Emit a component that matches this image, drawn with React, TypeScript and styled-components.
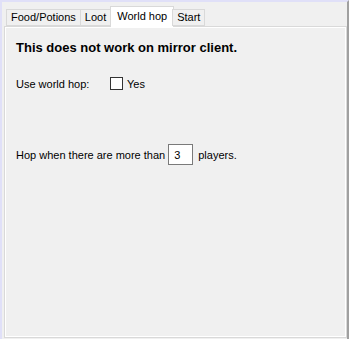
import React from "react";
import styled, { createGlobalStyle } from "styled-components";

const GlobalStyle = createGlobalStyle`
  html, body {
    margin: 0;
    padding: 0;
    background: #f0f0f0;
  }
  body {
    font-family: "Liberation Sans", Arial, sans-serif;
    font-size: 11px;
    color: #000;
  }
`;

const Frame = styled.div`
  box-sizing: border-box;
  width: 349px;
  height: 339px;
  display: flex;
  flex-direction: column;
  background: #f0f0f0;
  border-top: 2px solid #e0e0f8;
  border-left: 2px solid #e0e0f8;
  border-right: 2px solid #a0a0a0;
  padding: 0 0 1px 2px;
`;

const TabStrip = styled.div`
  display: flex;
  align-items: flex-end;
  height: 24px;
  padding-left: 2px;
  position: relative;
  z-index: 1;
`;

const Tab = styled.div<{ $active?: boolean }>`
  box-sizing: border-box;
  height: ${(p) => (p.$active ? 21 : 17)}px;
  padding: 0 ${(p) => (p.$active ? 6 : 4)}px;
  padding-bottom: ${(p) => (p.$active ? 3 : 1)}px;
  margin-bottom: ${(p) => (p.$active ? -1 : 0)}px;
  margin-left: -1px;
  margin-right: ${(p) => (p.$active ? -1 : 0)}px;
  display: flex;
  align-items: center;
  background: ${(p) => (p.$active ? "#ffffff" : "#f0f0f0")};
  border: 1px solid #d9d9d9;
  border-bottom: ${(p) => (p.$active ? "none" : "1px solid #d9d9d9")};
  white-space: nowrap;
  &:first-child {
    margin-left: 0;
  }
`;

const Panel = styled.div`
  flex: 1;
  box-sizing: border-box;
  border: 1px solid #d9d9d9;
  box-shadow: inset 1px 1px 0 #ffffff, inset -1px -1px 0 #ffffff;
  padding: 10px 11px;
`;

const Heading = styled.div`
  font-weight: bold;
  font-size: 13px;
  margin-top: 1px;
  height: 20px;
  line-height: 20px;
`;

const Row = styled.div<{ $top: number }>`
  display: flex;
  align-items: center;
  margin-top: ${(p) => p.$top}px;
`;

const Label = styled.span<{ $w?: number }>`
  display: inline-block;
  width: ${(p) => (p.$w ? `${p.$w}px` : "auto")};
`;

const CheckBox = styled.span`
  box-sizing: border-box;
  width: 13px;
  height: 13px;
  border: 1px solid #333333;
  background: #ffffff;
  margin-right: 4px;
`;

const NumberBox = styled.span`
  box-sizing: border-box;
  width: 25px;
  height: 21px;
  border: 1px solid #7a7a7a;
  background: #ffffff;
  display: flex;
  align-items: center;
  padding-left: 5px;
  margin: 0 5px 0 3px;
`;

export default function App() {
  return (
    <>
      <GlobalStyle />
      <Frame>
        <TabStrip>
          <Tab>Food/Potions</Tab>
          <Tab>Loot</Tab>
          <Tab $active>World hop</Tab>
          <Tab>Start</Tab>
        </TabStrip>
        <Panel>
          <Heading>This does not work on mirror client.</Heading>
          <Row $top={19}>
            <Label $w={94}>Use world hop:</Label>
            <CheckBox />
            <span>Yes</span>
          </Row>
          <Row $top={54}>
            <Label>Hop when there are more than</Label>
            <NumberBox>3</NumberBox>
            <span>players.</span>
          </Row>
        </Panel>
      </Frame>
    </>
  );
}
